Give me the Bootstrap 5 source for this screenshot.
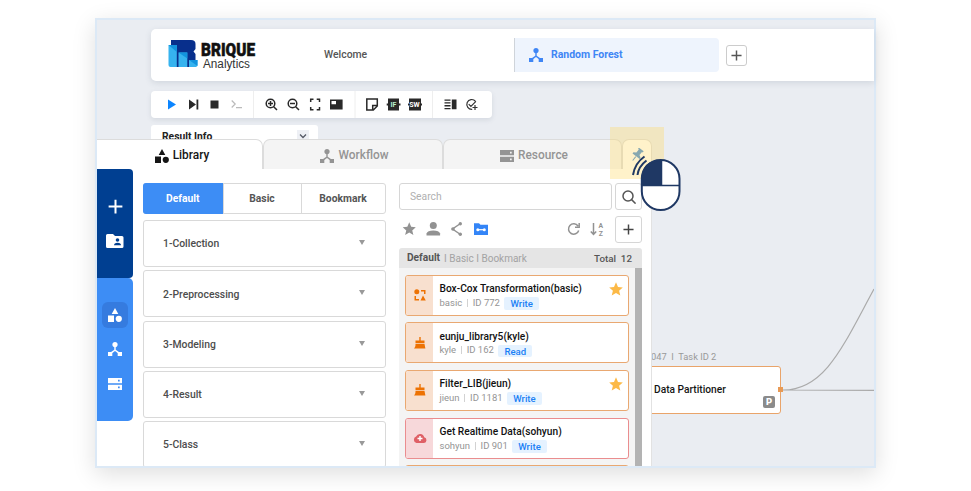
<!DOCTYPE html>
<html lang="en">
<head>
<meta charset="utf-8">
<meta name="viewport" content="width=device-width, initial-scale=1">
<title>BRIQUE Analytics</title>
<link href="https://cdn.jsdelivr.net/npm/bootstrap@5.3.0/dist/css/bootstrap.min.css" rel="stylesheet">
<style>
body{font-family:Roboto,"Liberation Sans",sans-serif;font-size:11px;line-height:1.2;color:#222;background:#fff;width:971px;height:491px}
svg{display:block;flex:none}
.stage{margin:18px 0 0 95px;width:781px;height:450px;border:2px solid #dce9f6;background:#eaedf2;box-shadow:0 6px 22px rgba(0,0,0,.13)}
.appbar{margin:9px 0 0 54px;height:52px;background:#fff;border-radius:5px 0 0 5px;box-shadow:0 2px 6px rgba(70,85,110,.15)}
.logo{width:90px;margin-left:17px}
.tab-welcome{width:256px;padding:1px 0 0 66px;font-size:10.4px;font-weight:500;color:#555}
.tab-active{width:205px;height:34px;background:#eef4fd;border-left:1px solid #cfd4da;border-radius:0 4px 4px 0;padding-left:14px;color:#3f86f5;font-weight:700;font-size:10.3px}
.tab-active span{padding-top:1px;letter-spacing:-.02px;font-size:10.5px}
.addtab{width:21px;height:21px;border:1px solid #ccc;border-radius:3px;margin-left:7px}
.tools{margin:10px 0 0 54px;width:341px;height:27px;background:#fff;border-radius:4px;box-shadow:0 2px 5px rgba(70,85,110,.13)}
.result{margin:7px 0 0 54px;width:167px;height:24px;background:#fff;border-radius:3px 3px 0 0;padding:6px 9px 0 11px;font-weight:700;font-size:10.3px}
.chev{width:12px;height:12px;background:#eef0f5;margin-top:-1px}
.drawer{left:0;top:119px;width:555px;height:327px}
.dtab{height:30px;background:#f4f4f4;border:1px solid #dcdcdc;border-bottom:0;border-radius:7px 7px 0 0;font-size:11.9px;color:#949494;font-weight:500;padding:2px 0 0 3px}
.dtab.on{background:#fff;color:#151515;border-left:0;border-top-left-radius:0;padding-left:5px}
.dtab.pin{padding:0}
.dbody{height:297px;background:#fff;border-right:1px solid #e2e2e2}
.rail{width:36px;flex:none}
.rail-a{height:109px;background:#003f91;border-radius:0 4px 4px 0;padding-top:30px}
.rail-b{height:143px;background:#3d8df5;border-radius:0 5px 5px 0;padding-top:24px}
.rail-on{width:26px;height:26px;border-radius:6px;background:#357bdf}
.cats{width:242.5px;margin-left:10px;padding-top:14px;flex:none}
.seg{height:30.5px;border:1px solid #d9d9d9;border-radius:3px;font-weight:700;font-size:10.3px;color:#555}
.seg>div{padding-top:1px}
.seg>div+div{border-left:1px solid #d9d9d9}
.seg .sel{background:#3d8df5;color:#fff;margin:-1px 0;border-radius:3px 0 0 3px}
.cat{height:47px;margin-bottom:3.3px;border:1px solid #d9d9d9;border-radius:3px;padding:2px 20px 0 19px;font-size:10.4px;font-weight:500;color:#4d4d4d;flex:none}
.tri{border:3.5px solid transparent;border-top:5px solid #999;border-bottom:0;margin-top:-4px}
.libs{width:243px;margin-left:13.5px;padding-top:14px;flex:none}
.box{border:1px solid #d6d6d6;border-radius:3px}
.sq{width:27px;height:27px}
.search{width:213px;height:27px;padding:2px 0 0 10px;color:#b0b0b0;font-size:10.3px}
.lhead{height:20px;background:#e5e5e5;border-radius:3px 3px 0 0;padding:1px 10px 0 8px;color:#a3a3a3;font-size:10px;margin-top:5px}
.lhead b{font-size:10.2px}
.lhead .ms-auto{font-size:9.8px}
.lbody{height:198px;background:#f4f4f4}
.thumb{width:7px;height:198px;background:#b3b3b3}
.lib{width:224px;height:41.2px;background:#fff;border:1px solid #e9a871;border-radius:3px;margin-bottom:6.5px;flex:none}
.lib .ic{width:27px;height:100%;background:#f8e0cf;border-radius:2px 0 0 2px;flex:none}
.lib.pink{border-color:#ea8d8f}.lib.pink .ic{background:#f7d8da}
.lib .nm{font-size:10.2px;line-height:13px;font-weight:500;color:#111;white-space:nowrap;padding-top:6.5px}
.lib .meta{font-size:9.5px;color:#949494;height:15px;white-space:nowrap}
.vbar{width:1px;height:8px;background:#d2d2d2;margin:0 5px 0 4.5px}
.perm{background:#e5f2ff;color:#1b80f5;font-weight:500;font-size:9.6px;height:12.5px;border-radius:2px;line-height:13px;margin:1.5px 0 0 4.5px;padding:0 6px}
.links{left:0;top:0}
.tid{left:554px;top:331px;font-size:9.3px;color:#999;white-space:nowrap}
.node{left:545px;top:346px;width:139px;height:48px;background:#fff;border:1px solid #e9a46a;border-radius:3px;padding:1px 0 0 11px;font-size:10.2px;font-weight:500;color:#151515}
.port{left:681px;top:367px;width:5px;height:5px;background:#e89a55}
.pbadge{right:5px;bottom:5px;width:12px;height:12px;border-radius:2px;background:#8b8b8b;color:#fff;font-weight:900;font-size:9.5px}
.glow{left:513px;top:107px;width:54px;height:52px;background:rgba(255,217,100,.34)}
.mouse{left:533px;top:131px}
</style>
<script src="https://cdn.jsdelivr.net/npm/bootstrap@5.3.0/dist/js/bootstrap.bundle.min.js"></script>
</head>
<body class="overflow-hidden">
<svg width="0" height="0" class="position-absolute">
<symbol id="shapes" viewBox="0 0 14 14"><path d="M7 0l3.300 6H3.700zM0 7.500h6V14H0z"/><circle cx="10.800" cy="10.800" r="3.100"/></symbol>
<symbol id="flow" viewBox="0 0 14 14"><circle cx="7" cy="2.600" r="2.600"/><path d="M0 10h4.300v4H0zM9.700 10H14v4H9.700z"/><path d="M6.300 4h1.400v3.700l4.300 3-1 1.200-4-3-4 3-1-1.200 4.300-3z"/></symbol>
<symbol id="server" viewBox="0 0 14 12"><path fill-rule="evenodd" d="M0 0h14v5.300H0zM10 1.800v1.700h1.700V1.800zM0 6.700h14V12H0zM10 8.500v1.700h1.700V8.500z"/></symbol>
<symbol id="plus" viewBox="0 0 12 12"><path d="M6 .5v11M.5 6h11" stroke="currentColor" stroke-width="1.600"/></symbol>
<symbol id="star" viewBox="0 0 14 14"><path d="M7 .3l2 4.700 4.800.4-3.700 3.300 1.200 4.900L7 11l-4.300 2.600 1.200-4.900L.2 5.400 5 5z"/></symbol>
<symbol id="broom" viewBox="0 0 12 12"><path d="M5.300 0h1.400v3.500H10.500v2.700H1.500V3.500h3.800zM1.500 7h9l.9 4.500H0C1.300 10.300 1.500 9 1.500 7z"/></symbol>
</svg>

<main class="stage position-relative">
 <header class="appbar d-flex align-items-center">
  <div class="logo"><svg width="90" height="46" viewBox="168 32 90 46">
   <path d="M171 40h20q4.500 0 4.500 4v5l-2 2.500 2 2.500v13H171z" fill="#082f8c"/>
   <path d="M168.500 45h8.300v22h-6.300q-2 0-2-2z" fill="#36b3ef"/><path d="M168.500 45h8.300v7z" fill="#1293de"/>
   <path d="M178.500 52.500h8.800V67h-8.800z" fill="#36b3ef"/><path d="M178.500 52.500h8.800v6z" fill="#1293de"/>
   <path d="M189 60h8.500v5q0 2-2 2H189z" fill="#36b3ef"/><path d="M189 60h8.500v6z" fill="#1293de"/>
   <text x="201" y="55.500" font-size="18" font-weight="900" fill="#111" stroke="#111" stroke-width=".5" textLength="54" lengthAdjust="spacingAndGlyphs">BRIQUE</text>
   <text x="203" y="67.500" font-family="Liberation Sans" font-size="12" fill="#333" textLength="47" lengthAdjust="spacingAndGlyphs">Analytics</text></svg></div>
  <div class="tab-welcome">Welcome</div>
  <div class="tab-active d-flex align-items-center"><svg width="14" height="14" fill="currentColor" class="me-2"><use href="#flow"/></svg><span>Random Forest</span></div>
  <div class="addtab d-flex align-items-center justify-content-center"><svg width="11" height="11" color="#555"><use href="#plus"/></svg></div>
 </header>
 <div class="tools"><svg width="341" height="27" viewBox="151 91 341 27" fill="#292929" stroke="none">
  <path d="M253.500 91v27M355 91v27M432.500 91v27" stroke="#eee"/>
  <path d="M168 99.500v10l8-5z" fill="#0c85ff"/>
  <path d="M189 99.500v10l7-5zM196.500 99.500h1.800v10h-1.800zM210.500 100.500h8v8h-8z"/>
  <path d="M231.700 100.500l3.500 3.500-3.500 3.500M236 107.700h6" fill="none" stroke="#bbb" stroke-width="1.200"/>
  <g fill="none" stroke="#292929" stroke-width="1.500"><circle cx="270.500" cy="103.500" r="4.300"/><path d="M273.700 106.700l3.300 3.300M268 103.500h5M270.500 101v5"/><circle cx="292.500" cy="103.500" r="4.300"/><path d="M295.700 106.700l3.300 3.300M290 103.500h5"/>
  <path d="M310.700 102v-2.700h2.800M316.700 99.300h2.800v2.700M310.700 107v2.700h2.800M316.700 109.700h2.800V107"/>
  <path d="M366.800 99h10.500v7l-4 4h-6.500zM377 105.500h-4.300v4.300"/></g>
  <path fill-rule="evenodd" d="M330 99.500h12.600v10H330zM331.500 101v3.300h4.500V101z"/>
  <path d="M388 98.500h11v12h-11zM386.700 103.500h13.800v2h-13.800zM409 98.500h12v12h-12zM408 103.500h14v2h-14z"/>
  <text x="390.400" y="107" font-size="7" font-weight="700" fill="#b9efcf">IF</text><text x="409.200" y="107" font-size="7" font-weight="700" fill="#fff">SW</text>
  <path d="M444.500 99.500h6v1.300h-6zM444.500 102.300h6v1.300h-6zM444.500 105.100h6v1.300h-6zM444.500 107.900h6v1.300h-6zM451.800 99.500h4.700v9.800h-4.700z"/>
  <path d="M475.500 101.300a4.900 4.900 0 1 0-3.300 8M468.700 104.200l2.200 2.200 5-5M475 105v5M472.500 107.500h5" fill="none" stroke="#333" stroke-width="1.200"/>
 </svg></div>
 <div class="result d-flex justify-content-between align-items-start"><span>Result Info</span><span class="chev"><svg width="12" height="12"><path d="M3 4.500l3 3 3-3" fill="none" stroke="#555a66" stroke-width="1.300"/></svg></span></div>

 <svg class="links position-absolute" width="777" height="446"><path d="M686 370C728 370 746 326 777 269M686 370l91 .3" fill="none" stroke="#aaa" stroke-width="1.200"/></svg>
 <div class="tid position-absolute">047 &nbsp;I&nbsp; Task ID 2</div>
 <div class="node position-absolute d-flex align-items-center">Data Partitioner<span class="pbadge position-absolute d-flex align-items-center justify-content-center">P</span></div>
 <div class="port position-absolute"></div>

 <section class="drawer position-absolute overflow-hidden">
  <div class="d-flex">
   <div class="dtab on d-flex align-items-center justify-content-center" style="width:166px"><svg width="14" height="14" fill="currentColor" class="me-1"><use href="#shapes"/></svg>Library</div>
   <div class="dtab d-flex align-items-center justify-content-center" style="width:180px"><svg width="14" height="14" fill="currentColor" class="me-1"><use href="#flow"/></svg>Workflow</div>
   <div class="dtab d-flex align-items-center justify-content-center" style="width:179px"><svg width="14" height="12" fill="currentColor" class="me-1"><use href="#server"/></svg>Resource</div>
   <div class="dtab pin d-flex align-items-center justify-content-center" style="width:30px;background:#fff"><svg width="14" height="14" viewBox="0 0 14 14"><g transform="rotate(38 7 7)" fill="#4a8fd8"><path d="M4 0h6v1.500H9v4l2.500 1.500v1.500h-9V7L5 5.500v-4H4zM6.500 9h1v5h-1z"/></g></svg></div>
  </div>
  <div class="dbody d-flex">
   <nav class="rail">
    <div class="rail-a d-flex flex-column align-items-center"><svg width="15" height="15" color="#fff"><use href="#plus"/></svg>
     <svg width="18" height="14" viewBox="0 0 18 14" style="margin-top:20px"><path d="M0 1.500Q0 0 1.500 0H7l2 2h7q1.500 0 1.500 1.500v9q0 1.500-1.500 1.500H1.500Q0 14 0 12.500z" fill="#fff"/><circle cx="11.500" cy="6" r="1.800" fill="#003f91"/><path d="M8 11.300q0-2.500 3.500-2.500t3.500 2.500z" fill="#003f91"/></svg></div>
    <div class="rail-b d-flex flex-column align-items-center text-white">
     <div class="rail-on d-flex align-items-center justify-content-center"><svg width="14" height="14" fill="#fff"><use href="#shapes"/></svg></div>
     <svg width="14" height="14" fill="#fff" style="margin-top:14px"><use href="#flow"/></svg>
     <svg width="14" height="12" fill="#fff" style="margin-top:22px"><use href="#server"/></svg></div>
   </nav>
   <div class="cats">
    <div class="seg d-flex text-center mb-1"><div class="sel d-flex align-items-center justify-content-center" style="width:79.500px;margin-left:-1px">Default</div><div class="d-flex align-items-center justify-content-center" style="width:78px">Basic</div><div class="flex-fill d-flex align-items-center justify-content-center">Bookmark</div></div>
    <div style="height:2.500px"></div>
    <div class="cat d-flex align-items-center justify-content-between">1-Collection<i class="tri"></i></div>
    <div class="cat d-flex align-items-center justify-content-between">2-Preprocessing<i class="tri"></i></div>
    <div class="cat d-flex align-items-center justify-content-between">3-Modeling<i class="tri"></i></div>
    <div class="cat d-flex align-items-center justify-content-between">4-Result<i class="tri"></i></div>
    <div class="cat d-flex align-items-center justify-content-between">5-Class<i class="tri"></i></div>
   </div>
   <div class="libs">
    <div class="d-flex justify-content-between"><div class="box search d-flex align-items-center">Search</div><div class="box sq d-flex align-items-center justify-content-center"><svg width="14" height="14" fill="none" stroke="#555" stroke-width="1.500"><circle cx="6" cy="6" r="5"/><path d="M9.600 9.600l4 4"/></svg></div></div>
    <div class="d-flex align-items-center" style="margin-top:6px">
     <svg width="216" height="27" viewBox="399 216 216 27" fill="#929292"><use href="#star" x="402.500" y="222" width="13.500" height="13.500"/>
      <circle cx="433.300" cy="225.500" r="3.500"/><path d="M426.500 235.500v-2q1-3 6.800-3t6.800 3v2z"/>
      <path d="M460.500 223.500l-8 5.500 8 5.500" fill="none" stroke="#929292" stroke-width="1.500"/><circle cx="460.300" cy="223.800" r="1.700"/><circle cx="453" cy="229" r="1.800"/><circle cx="460.300" cy="234.200" r="1.700"/>
      <path d="M474 223.300h5l1.500 1.500h7.500V235h-14z" fill="#3485f7"/><path d="M477 229.700h8" stroke="#fff" stroke-width="1.200"/><circle cx="477.800" cy="229.700" r="1.500" fill="#fff"/><circle cx="484.300" cy="229.700" r="1.500" fill="#fff"/>
      <path d="M578 226a5.200 5.200 0 1 0 .7 4.500M579.200 223v4.300H575" fill="none" stroke="#929292" stroke-width="1.500"/>
      <path d="M593.500 223v11M590.800 231.500l2.700 3 2.700-3" fill="none" stroke="#929292" stroke-width="1.500"/><text x="598.500" y="228" font-size="6.800" font-weight="700">A</text><text x="598.700" y="236" font-size="6.800" font-weight="700">Z</text></svg>
     <div class="box sq d-flex align-items-center justify-content-center"><svg width="11" height="11" color="#444"><use href="#plus"/></svg></div></div>
    <div class="lhead d-flex align-items-center"><b style="color:#555">Default</b><span class="ms-1">I Basic&nbsp;I Bookmark</span><span class="ms-auto" style="color:#555;font-weight:500">Total &nbsp;12</span></div>
    <div class="lbody d-flex justify-content-between overflow-hidden">
     <div style="padding:6.500px 0 0 6px">
      <div class="lib d-flex"><div class="ic d-flex align-items-center justify-content-center"><svg width="12" height="12" fill="#ed7203"><circle cx="2.800" cy="2.800" r="2.500"/><path d="M7 1h4.500v4H10V2.500H7zM.5 7H2v3h3v1.500H.5zM9 6.500l2.800 5H6.500z"/></svg></div>
       <div class="ps-2 flex-fill" style="margin-left:-1.500px"><div class="nm">Box-Cox Transformation(basic)</div><div class="meta d-flex align-items-center">basic<i class="vbar"></i>ID 772<span class="perm">Write</span></div></div>
       <svg width="14" height="14" fill="#fcb946" style="margin:6px 5px 0 0"><use href="#star"/></svg></div>
      <div class="lib d-flex"><div class="ic d-flex align-items-center justify-content-center"><svg width="12" height="12" fill="#ed7203"><use href="#broom"/></svg></div>
       <div class="ps-2" style="margin-left:-1.500px"><div class="nm">eunju_library5(kyle)</div><div class="meta d-flex align-items-center">kyle<i class="vbar"></i>ID 162<span class="perm">Read</span></div></div></div>
      <div class="lib d-flex"><div class="ic d-flex align-items-center justify-content-center"><svg width="12" height="12" fill="#ed7203"><use href="#broom"/></svg></div>
       <div class="ps-2 flex-fill" style="margin-left:-1.500px"><div class="nm">Filter_LIB(jieun)</div><div class="meta d-flex align-items-center">jieun<i class="vbar"></i>ID 1181<span class="perm">Write</span></div></div>
       <svg width="14" height="14" fill="#fcb946" style="margin:6px 5px 0 0"><use href="#star"/></svg></div>
      <div class="lib pink d-flex"><div class="ic d-flex align-items-center justify-content-center"><svg width="14" height="10" viewBox="0 0 14 10"><path d="M3.500 10a3.400 3.400 0 0 1-.4-6.500 4.300 4.300 0 0 1 8.100.8A2.900 2.900 0 0 1 11 10z" fill="#df6066"/><path d="M7 3v5M4.500 5.500h5" stroke="#fff" stroke-width="1.400"/></svg></div>
       <div class="ps-2" style="margin-left:-1.500px"><div class="nm">Get Realtime Data(sohyun)</div><div class="meta d-flex align-items-center">sohyun<i class="vbar"></i>ID 901<span class="perm">Write</span></div></div></div>
      <div class="lib"></div>
     </div>
     <div class="thumb"></div>
    </div>
   </div>
  </div>
 </section>
 <div class="glow position-absolute"></div>
 <svg class="mouse position-absolute" width="56" height="64" viewBox="630 151 56 64">
  <rect x="641.800" y="160" width="37.700" height="50" rx="18.800" ry="18.800" fill="#fff"/>
  <path d="M661 160v25.500h-19.200v-6.700q0-18.800 19.200-18.800z" fill="#1f3864"/>
  <rect x="641.800" y="160" width="37.700" height="50" rx="18.800" ry="18.800" fill="none" stroke="#1f3864" stroke-width="2"/>
  <path d="M661.500 160v25M642 185.500h37.500" stroke="#1f3864" stroke-width="1.500"/>
  <path d="M633 175q2-12 11.500-18.500M637.500 175q1-8.500 9-14.500" fill="none" stroke="#1f3864" stroke-width="2"/>
 </svg>
</main>
</body>
</html>
